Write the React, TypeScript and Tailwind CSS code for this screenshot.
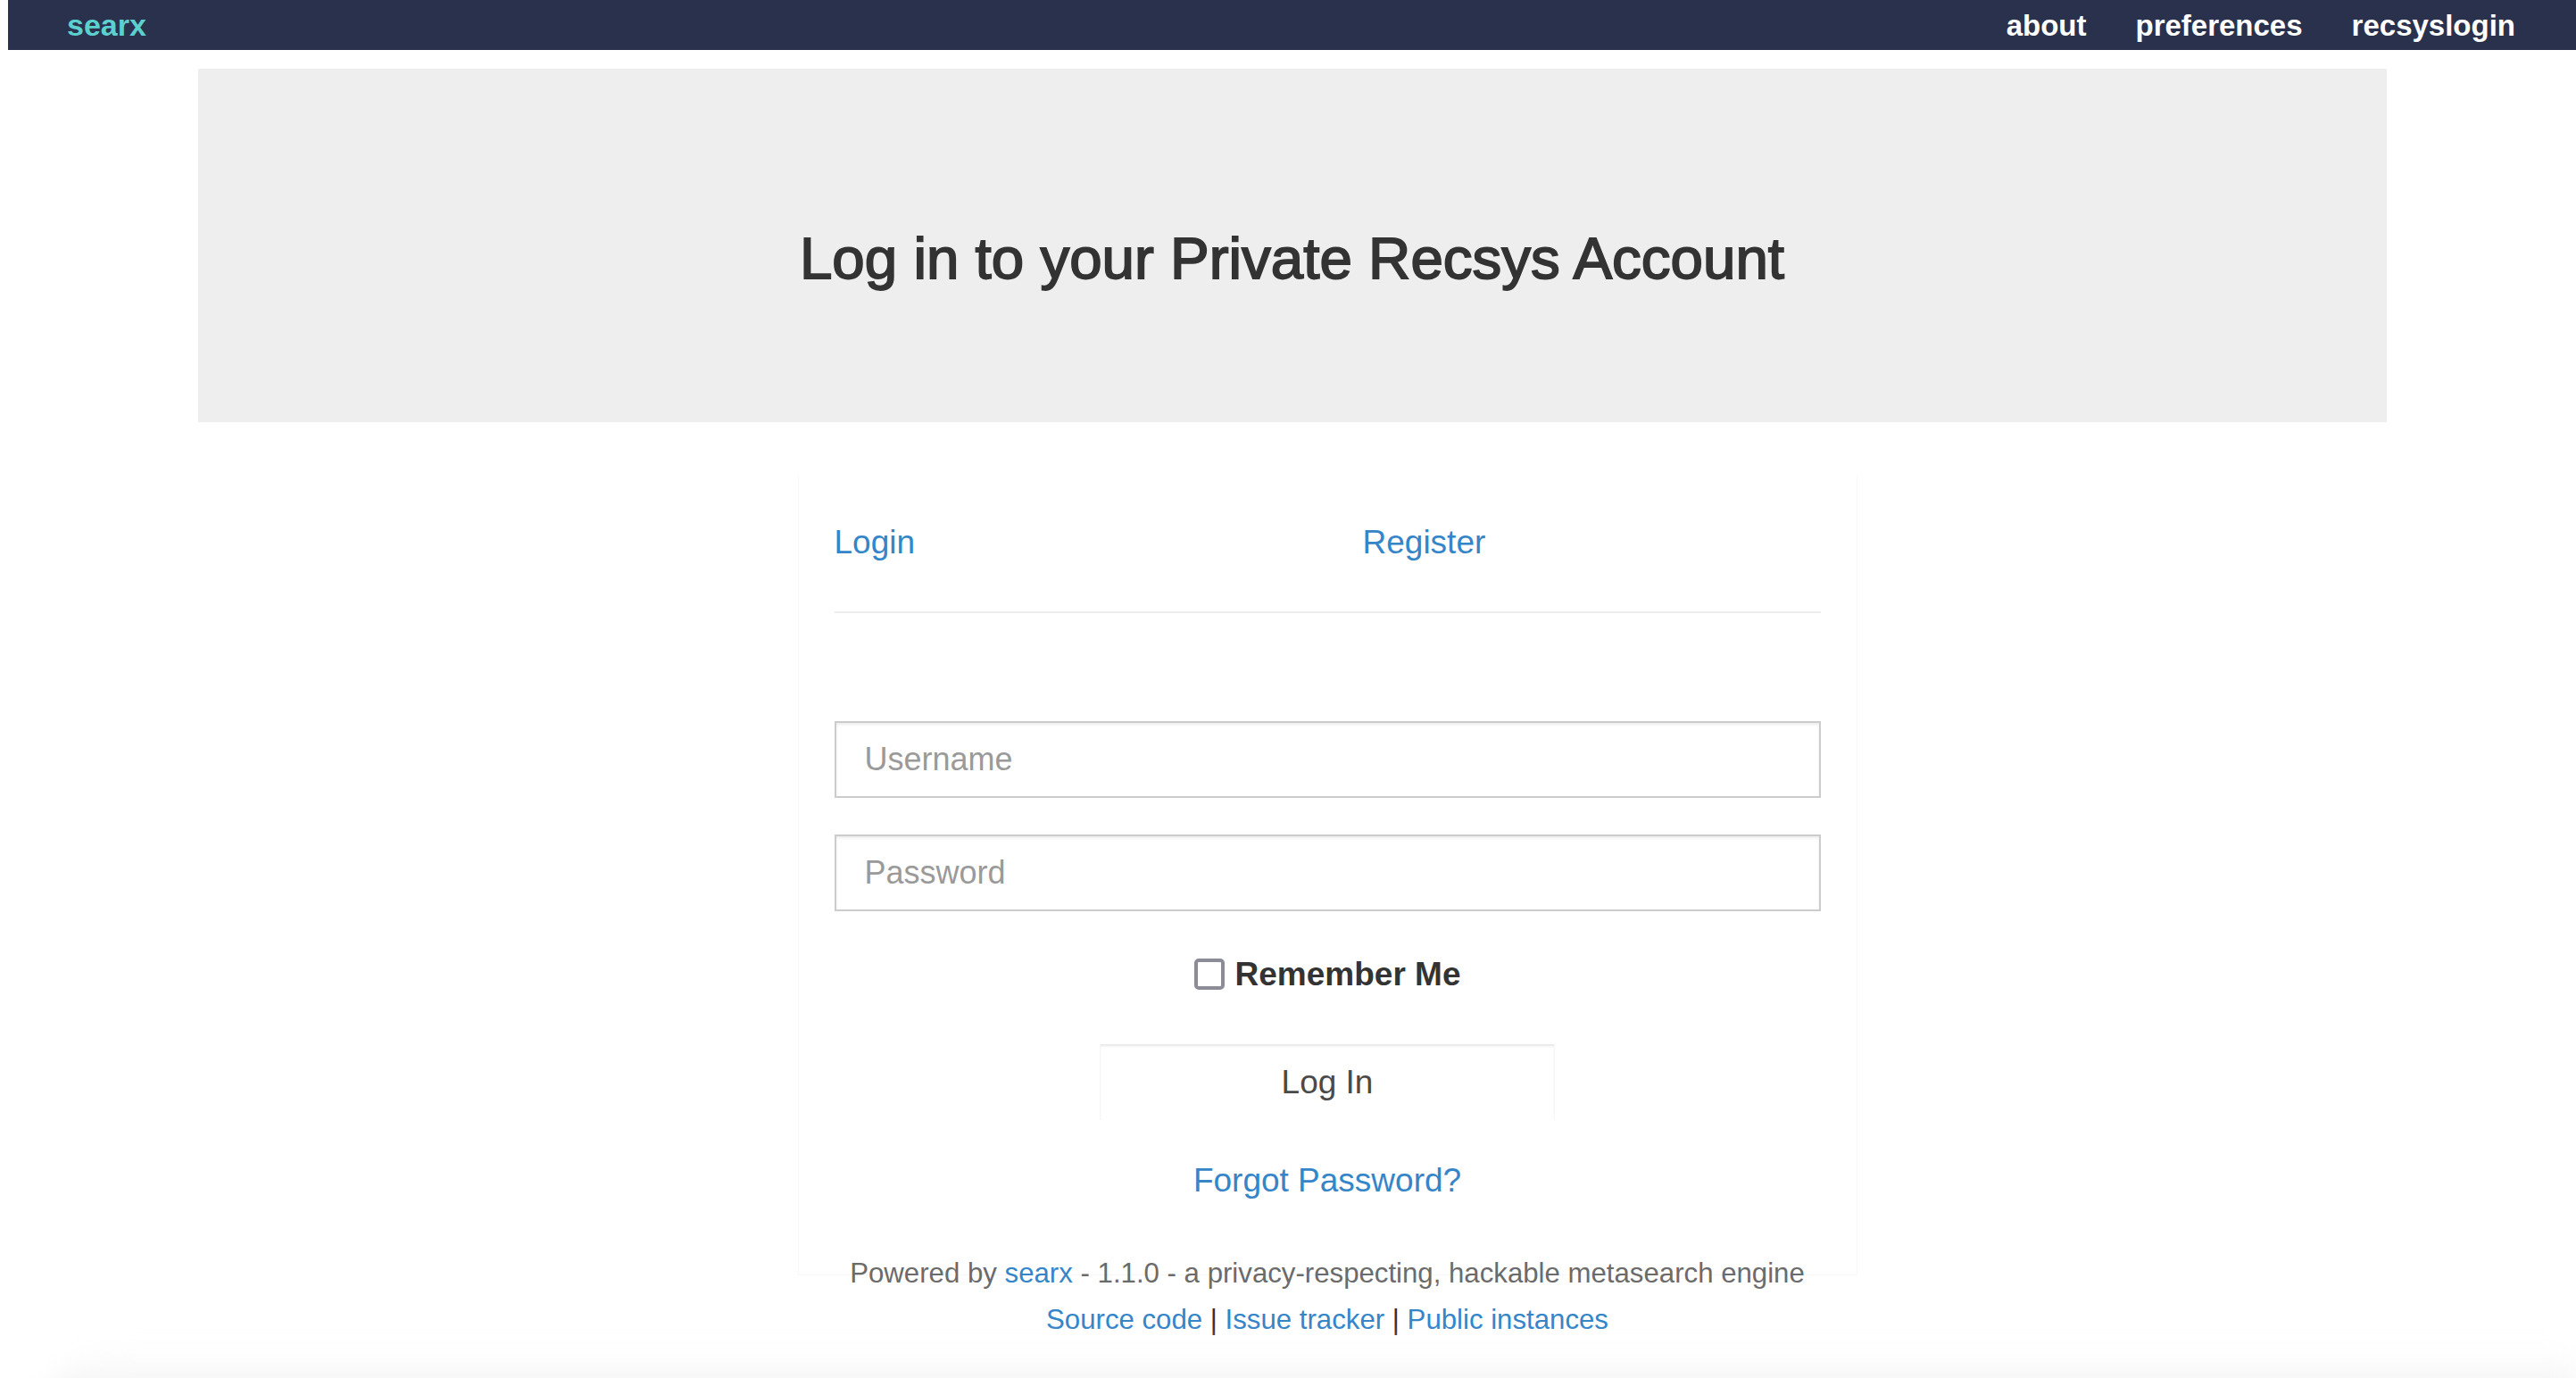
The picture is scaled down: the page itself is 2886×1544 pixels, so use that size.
import React from "react";

export default function App() {
  return (
    <div className="h-[1544px] w-full overflow-hidden bg-white pl-[9px] font-['Liberation_Sans',Arial,sans-serif]">
      {/* Navbar */}
      <div className="flex h-[56px] items-center justify-between bg-[#2a314d] pl-[66px] pr-[68px]">
        <a className="text-[34px] font-bold leading-none text-[#5ccfcf]">searx</a>
        <div className="flex items-center gap-[55px] text-[33px] font-bold leading-none text-white">
          <a>about</a>
          <a>preferences</a>
          <a>recsyslogin</a>
        </div>
      </div>

      {/* Jumbotron */}
      <div className="mx-auto mt-[21px] h-[396px] w-[2452px] bg-[#eeeeee] pt-[177px] text-center">
        <h1 className="text-[65.5px] leading-[72px] text-[#333333] [-webkit-text-stroke:1.8px_#333333]">
          Log in to your Private Recsys Account
        </h1>
      </div>

      {/* Form panel */}
      <div className="mx-auto w-[2452px]">
        <div className="ml-[672px] mt-[60px] w-[1187px] border-x border-b border-[#f7f7f7] px-[40px] pb-[84px] pt-[52px]">
          <div className="flex h-[44px] items-center text-[37px] leading-none text-[#3585c9]">
            <a className="w-[592px]">Login</a>
            <a>Register</a>
          </div>
          <div className="mt-[56px] h-[2px] bg-[#ededed]" />

          <div className="mt-[121px] flex h-[86px] items-center border-2 border-[#cccccc] bg-white pl-[32px] text-[36px] text-[#9a9a9a] shadow-[inset_0_2px_3px_rgba(0,0,0,0.08)]">
            Username
          </div>
          <div className="mt-[41px] flex h-[86px] items-center border-2 border-[#cccccc] bg-white pl-[32px] text-[36px] text-[#9a9a9a] shadow-[inset_0_2px_3px_rgba(0,0,0,0.08)]">
            Password
          </div>

          <div className="mt-[50px] flex h-[40px] items-center justify-center gap-[12px]">
            <span className="h-[35px] w-[34px] rounded-[5px] border-[4px] border-[#8c8c96] bg-white" />
            <span className="text-[37px] font-bold leading-none text-[#333333]">Remember Me</span>
          </div>

          <div className="mt-[59px] flex justify-center">
            <div className="flex h-[85px] w-[510px] items-center justify-center border-l border-r border-[#f6f6f6] bg-white text-[37px] text-[#4a4a4a] shadow-[inset_0_3px_3px_-1px_#e6e6e6]">
              Log In
            </div>
          </div>

          <div className="mt-[45px] flex h-[44px] items-center justify-center text-[37px] leading-none text-[#3585c9]">
            <a>Forgot Password?</a>
          </div>
        </div>

        {/* Footer */}
        <div className="ml-[672px] mt-[-22px] w-[1187px] text-center text-[31.2px] text-[#6b6b6b]">
          <div className="leading-[40px]">
            Powered by <a className="text-[#3585c9]">searx</a> - 1.1.0 - a privacy-respecting, hackable metasearch engine
          </div>
          <div className="mt-[12px] leading-[40px]">
            <a className="text-[#3585c9]">Source code</a>
            <span className="text-[#333333]"> | </span>
            <a className="text-[#3585c9]">Issue tracker</a>
            <span className="text-[#333333]"> | </span>
            <a className="text-[#3585c9]">Public instances</a>
          </div>
        </div>
      </div>

      <div className="ml-[40px] mt-[14px] h-[80px] rounded-tl-[80px] bg-gradient-to-b from-white to-[#ebebeb] blur-[14px]" />
    </div>
  );
}
